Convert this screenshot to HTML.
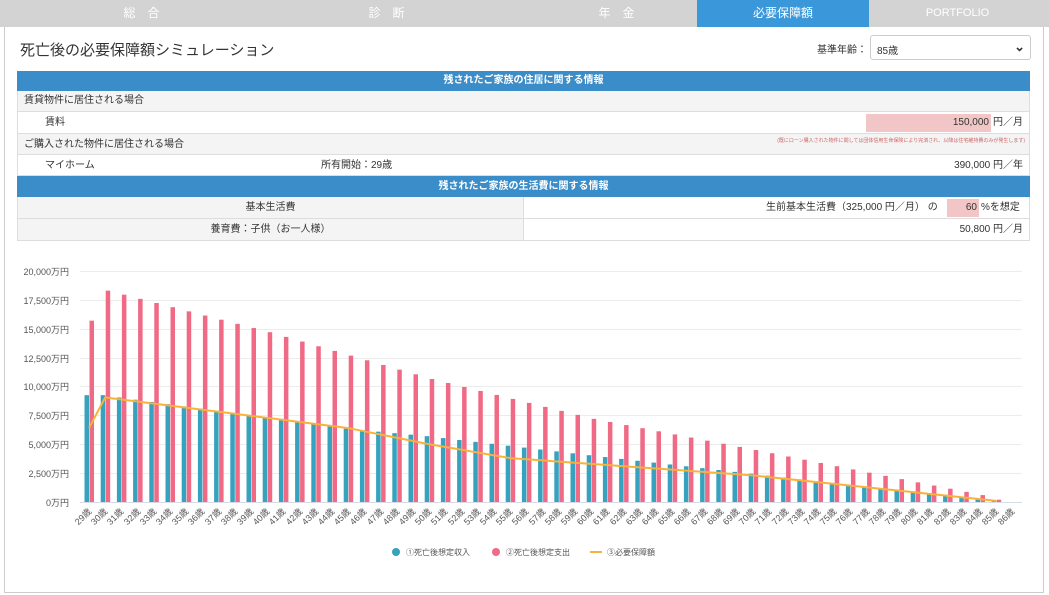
<!DOCTYPE html>
<html><head><meta charset="utf-8">
<style>
*{margin:0;padding:0;box-sizing:border-box}
body{width:1049px;height:595px;background:#fff;font-family:"Liberation Sans","Noto Sans CJK JP",sans-serif;color:#333;position:relative;overflow:hidden;font-size:10px}
.tabs{position:absolute;left:0;top:0;width:1049px;height:27px;background:#d3d3d3}
.tab{position:absolute;top:0;height:27px;line-height:27px;color:#fff;font-size:12px;text-align:center}
.panel{position:absolute;left:4px;top:27px;width:1040px;height:566px;border:1px solid #ccc;border-top:none}
.a{position:absolute}
.row{position:absolute;left:17px;width:1013px;border-bottom:1px solid #ddd}
.hd{background:#3a8dc8;color:#fff;text-align:center;font-weight:bold;font-size:10px}
.g{background:#f4f4f4}
</style></head><body>
<div class="tabs">
<div class="tab" style="left:60px;width:175px;letter-spacing:12px">総合</div>
<div class="tab" style="left:305px;width:175px;letter-spacing:12px">診断</div>
<div class="tab" style="left:535px;width:175px;letter-spacing:12px">年金</div>
<div class="tab" style="left:697px;width:172px;background:#3a98da">必要保障額</div>
<div class="tab" style="left:870px;width:175px;font-size:11px">PORTFOLIO</div>
</div>
<div class="panel"></div>
<div class="a" style="left:20px;top:39px;font-size:15px;color:#333">死亡後の必要保障額シミュレーション</div>
<div class="a" style="left:817px;top:41px;font-size:10px">基準年齢：</div>
<div class="a" style="left:870px;top:35px;width:161px;height:25px;border:1px solid #ccc;border-radius:3px;font-size:10px;padding:6px 0 0 6px">85歳<span style="position:absolute;right:5px;top:3px;font-size:13px;font-weight:bold">⌄</span></div>

<div class="row hd" style="top:71px;height:20px;line-height:20px;border:none">残されたご家族の住居に関する情報</div>
<div class="row g" style="top:91px;height:21px;line-height:20px;padding-left:6px;border-left:1px solid #ddd;border-right:1px solid #ddd">賃貸物件に居住される場合</div>
<div class="row" style="top:112px;height:22px;line-height:22px;border-left:1px solid #ddd;border-right:1px solid #ddd"><span class="a" style="left:27px">賃料</span><span class="a" style="left:848px;top:2px;width:125px;height:18px;line-height:18px;background:#f2c6c6;text-align:right;padding-right:2px">150,000</span><span class="a" style="left:975px">円／月</span></div>
<div class="row g" style="top:134px;height:21px;line-height:21px;padding-left:6px;border-left:1px solid #ddd;border-right:1px solid #ddd">ご購入された物件に居住される場合<span class="a" style="right:4px;top:-3px;font-size:5px;color:#c66">(既にローン購入された物件に関しては団体信用生命保険により完済され、以降は住宅維持費のみが発生します)</span></div>
<div class="row" style="top:155px;height:21px;line-height:21px;border-left:1px solid #ddd;border-right:1px solid #ddd"><span class="a" style="left:27px">マイホーム</span><span class="a" style="left:303px">所有開始：29歳</span><span class="a" style="right:6px">390,000 円／年</span></div>
<div class="row hd" style="top:176px;height:21px;line-height:21px;border:none">残されたご家族の生活費に関する情報</div>
<div class="row" style="top:197px;height:22px;line-height:22px;border-left:1px solid #ddd;border-right:1px solid #ddd"><span class="a g" style="left:0;width:506px;height:21px;text-align:center;border-right:1px solid #ddd">基本生活費</span><span class="a" style="left:748px">生前基本生活費（325,000 円／月） の</span><span class="a" style="left:929px;top:2px;width:32px;height:18px;line-height:18px;background:#f2c6c6;text-align:right;padding-right:2px">60</span><span class="a" style="left:963px">%を想定</span></div>
<div class="row" style="top:219px;height:22px;line-height:22px;border-left:1px solid #ddd;border-right:1px solid #ddd"><span class="a g" style="left:0;width:506px;height:21px;text-align:center;border-right:1px solid #ddd">養育費：子供（お一人様）</span><span class="a" style="right:6px">50,800 円／月</span></div>

<svg class="a" style="left:0;top:0" width="1049" height="595" font-family="Liberation Sans,Noto Sans CJK JP,sans-serif">
<g stroke="#ececec" stroke-width="1">
<line x1="80" x2="1022" y1="271.5" y2="271.5"/><line x1="80" x2="1022" y1="300.5" y2="300.5"/><line x1="80" x2="1022" y1="329.5" y2="329.5"/><line x1="80" x2="1022" y1="358.5" y2="358.5"/><line x1="80" x2="1022" y1="386.5" y2="386.5"/><line x1="80" x2="1022" y1="415.5" y2="415.5"/><line x1="80" x2="1022" y1="444.5" y2="444.5"/><line x1="80" x2="1022" y1="473.5" y2="473.5"/>
</g>
<line x1="80" x2="1022" y1="502.5" y2="502.5" stroke="#d5dbe8"/>
<g font-size="9" fill="#555" text-anchor="end">
<text x="69" y="275">20,000万円</text><text x="69" y="304">17,500万円</text><text x="69" y="333">15,000万円</text><text x="69" y="362">12,500万円</text><text x="69" y="390">10,000万円</text><text x="69" y="419">7,500万円</text><text x="69" y="448">5,000万円</text><text x="69" y="477">2,500万円</text><text x="69" y="506">0万円</text>
</g>
<g id="bars"></g>
<polyline id="ln" fill="none" stroke="#f7b23b" stroke-width="2"/>
<g id="lbl" font-size="9" fill="#555" text-anchor="end">
<text transform="translate(92,512) rotate(-45)">29歳</text><text transform="translate(108,512) rotate(-45)">30歳</text><text transform="translate(124,512) rotate(-45)">31歳</text><text transform="translate(141,512) rotate(-45)">32歳</text><text transform="translate(157,512) rotate(-45)">33歳</text><text transform="translate(173,512) rotate(-45)">34歳</text><text transform="translate(189,512) rotate(-45)">35歳</text><text transform="translate(205,512) rotate(-45)">36歳</text><text transform="translate(222,512) rotate(-45)">37歳</text><text transform="translate(238,512) rotate(-45)">38歳</text><text transform="translate(254,512) rotate(-45)">39歳</text><text transform="translate(270,512) rotate(-45)">40歳</text><text transform="translate(286,512) rotate(-45)">41歳</text><text transform="translate(303,512) rotate(-45)">42歳</text><text transform="translate(319,512) rotate(-45)">43歳</text><text transform="translate(335,512) rotate(-45)">44歳</text><text transform="translate(351,512) rotate(-45)">45歳</text><text transform="translate(367,512) rotate(-45)">46歳</text><text transform="translate(384,512) rotate(-45)">47歳</text><text transform="translate(400,512) rotate(-45)">48歳</text><text transform="translate(416,512) rotate(-45)">49歳</text><text transform="translate(432,512) rotate(-45)">50歳</text><text transform="translate(448,512) rotate(-45)">51歳</text><text transform="translate(465,512) rotate(-45)">52歳</text><text transform="translate(481,512) rotate(-45)">53歳</text><text transform="translate(497,512) rotate(-45)">54歳</text><text transform="translate(513,512) rotate(-45)">55歳</text><text transform="translate(529,512) rotate(-45)">56歳</text><text transform="translate(546,512) rotate(-45)">57歳</text><text transform="translate(562,512) rotate(-45)">58歳</text><text transform="translate(578,512) rotate(-45)">59歳</text><text transform="translate(594,512) rotate(-45)">60歳</text><text transform="translate(610,512) rotate(-45)">61歳</text><text transform="translate(627,512) rotate(-45)">62歳</text><text transform="translate(643,512) rotate(-45)">63歳</text><text transform="translate(659,512) rotate(-45)">64歳</text><text transform="translate(675,512) rotate(-45)">65歳</text><text transform="translate(691,512) rotate(-45)">66歳</text><text transform="translate(708,512) rotate(-45)">67歳</text><text transform="translate(724,512) rotate(-45)">68歳</text><text transform="translate(740,512) rotate(-45)">69歳</text><text transform="translate(756,512) rotate(-45)">70歳</text><text transform="translate(772,512) rotate(-45)">71歳</text><text transform="translate(789,512) rotate(-45)">72歳</text><text transform="translate(805,512) rotate(-45)">73歳</text><text transform="translate(821,512) rotate(-45)">74歳</text><text transform="translate(837,512) rotate(-45)">75歳</text><text transform="translate(853,512) rotate(-45)">76歳</text><text transform="translate(870,512) rotate(-45)">77歳</text><text transform="translate(886,512) rotate(-45)">78歳</text><text transform="translate(902,512) rotate(-45)">79歳</text><text transform="translate(918,512) rotate(-45)">80歳</text><text transform="translate(934,512) rotate(-45)">81歳</text><text transform="translate(951,512) rotate(-45)">82歳</text><text transform="translate(967,512) rotate(-45)">83歳</text><text transform="translate(983,512) rotate(-45)">84歳</text><text transform="translate(999,512) rotate(-45)">85歳</text><text transform="translate(1015,512) rotate(-45)">86歳</text>
</g>
<g font-size="8" fill="#555">
<circle cx="396" cy="552" r="4" fill="#37a2be"/><text x="406" y="555">①死亡後想定収入</text>
<circle cx="496" cy="552" r="4" fill="#f06a85"/><text x="506" y="555">②死亡後想定支出</text>
<line x1="590" x2="602" y1="552" y2="552" stroke="#f7b23b" stroke-width="2"/><text x="607" y="555">③必要保障額</text>
</g>
</svg>
<script>
(function(){
function interp(pts,a){for(var i=0;i<pts.length-1;i++){if(a>=pts[i][0]&&a<=pts[i+1][0]){var t=(a-pts[i][0])/(pts[i+1][0]-pts[i][0]);return pts[i][1]+t*(pts[i+1][1]-pts[i][1]);}}return 0;}
var P=[[29,15700],[30,18300],[31,17950],[40,14700],[50,10650],[60,7200],[70,4500],[80,1700],[84,600],[85,200],[86,0]];
var T=[[29,9250],[30,9250],[31,9050],[45,6350],[50,5700],[60,4050],[70,2450],[80,800],[85,100],[86,0]];
var L=[[29,6400],[30,9050],[45,6400],[50,5000],[55,3800],[70,2300],[85,100]];
var s=231/20000,b=502,g=document.getElementById('bars'),h='',pts=[];
for(var a=29;a<=86;a++){var c=89+(a-29)*16.2;
var tv=interp(T,a),pv=interp(P,a);
if(tv>0)h+='<rect x="'+(c-4.5)+'" y="'+(b-tv*s)+'" width="4.5" height="'+(tv*s)+'" fill="#37a2be"/>';
if(pv>0)h+='<rect x="'+(c+0.5)+'" y="'+(b-pv*s)+'" width="4.5" height="'+(pv*s)+'" fill="#f06a85"/>';
if(a<=85)pts.push(c+','+(b-interp(L,a)*s));}
g.innerHTML=h;document.getElementById('ln').setAttribute('points',pts.join(' '));
})();
</script>
</body></html>
